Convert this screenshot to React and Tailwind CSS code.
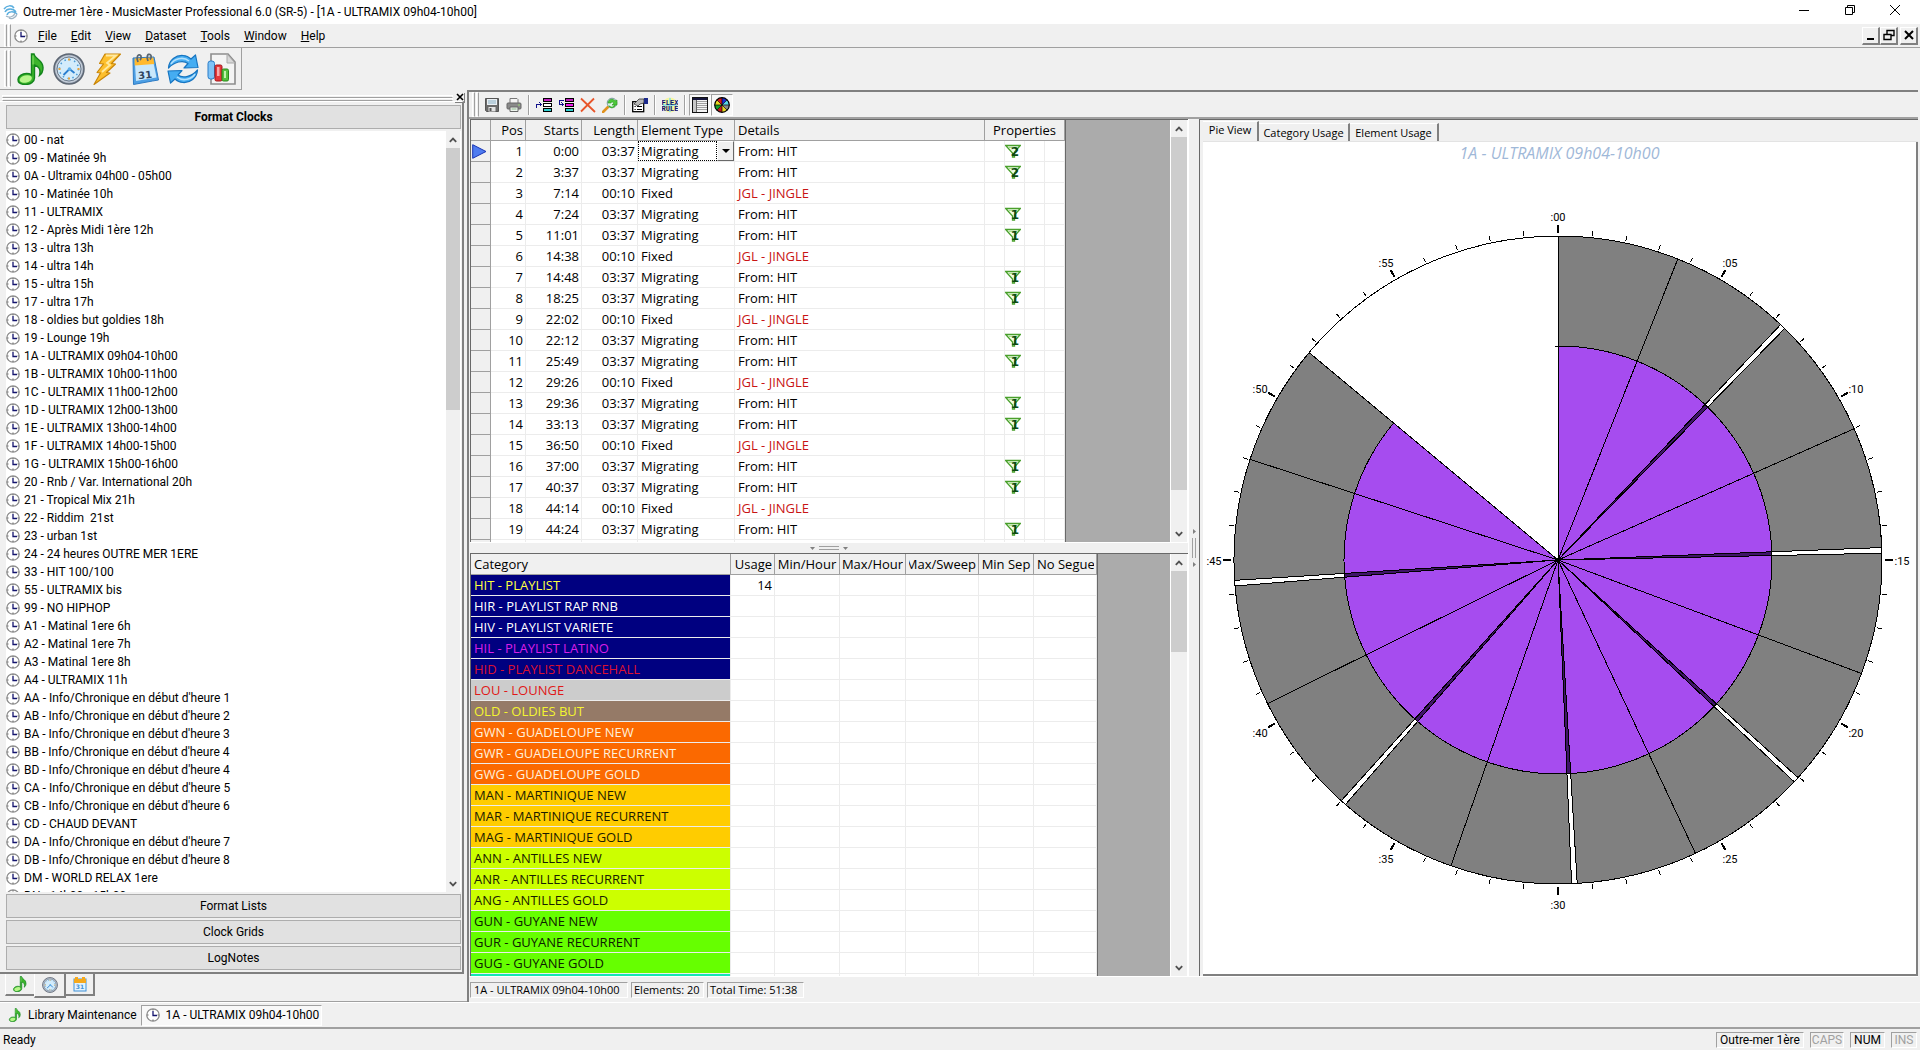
const menus = ['File', 'Edit', 'View', 'Dataset', 'Tools', 'Window', 'Help'];

const clocks = [
  '00 - nat',
  '09 - Matinée 9h',
  '0A - Ultramix 04h00 - 05h00',
  '10 - Matinée 10h',
  '11 - ULTRAMIX',
  '12 - Après Midi 1ère 12h',
  '13 - ultra 13h',
  '14 - ultra 14h',
  '15 - ultra 15h',
  '17 - ultra 17h',
  '18 - oldies but goldies 18h',
  '19 - Lounge 19h',
  '1A - ULTRAMIX 09h04-10h00',
  '1B - ULTRAMIX 10h00-11h00',
  '1C - ULTRAMIX 11h00-12h00',
  '1D - ULTRAMIX 12h00-13h00',
  '1E - ULTRAMIX 13h00-14h00',
  '1F - ULTRAMIX 14h00-15h00',
  '1G - ULTRAMIX 15h00-16h00',
  '20 - Rnb / Var. International 20h',
  '21 - Tropical Mix 21h',
  '22 - Riddim  21st',
  '23 - urban 1st',
  '24 - 24 heures OUTRE MER 1ERE',
  '33 - HIT 100/100',
  '55 - ULTRAMIX bis',
  '99 - NO HIPHOP',
  'A1 - Matinal 1ere 6h',
  'A2 - Matinal 1ere 7h',
  'A3 - Matinal 1ere 8h',
  'A4 - ULTRAMIX 11h',
  "AA - Info/Chronique en début d'heure 1",
  "AB - Info/Chronique en début d'heure 2",
  "BA - Info/Chronique en début d'heure 3",
  "BB - Info/Chronique en début d'heure 4",
  "BD - Info/Chronique en début d'heure 4",
  "CA - Info/Chronique en début d'heure 5",
  "CB - Info/Chronique en début d'heure 6",
  'CD - CHAUD DEVANT',
  "DA - Info/Chronique en début d'heure 7",
  "DB - Info/Chronique en début d'heure 8",
  'DM - WORLD RELAX 1ere',
  'DN - 14h00 - 15h00',
];

// start time, fixed element or not, number of filters
const elements = [
  ['0:00', false, 2],
  ['3:37', false, 2],
  ['7:14', true, 0],
  ['7:24', false, 1],
  ['11:01', false, 1],
  ['14:38', true, 0],
  ['14:48', false, 1],
  ['18:25', false, 1],
  ['22:02', true, 0],
  ['22:12', false, 1],
  ['25:49', false, 1],
  ['29:26', true, 0],
  ['29:36', false, 1],
  ['33:13', false, 1],
  ['36:50', true, 0],
  ['37:00', false, 1],
  ['40:37', false, 1],
  ['44:14', true, 0],
  ['44:24', false, 1],
  ['48:01', false, 1],
];

const categories = [
  ['HIT - PLAYLIST', 'bg-[#000080] text-[#ffff40]', 14],
  ['HIR - PLAYLIST RAP RNB', 'bg-[#000080] text-white'],
  ['HIV - PLAYLIST VARIETE', 'bg-[#000080] text-white'],
  ['HIL - PLAYLIST LATINO', 'bg-[#000080] text-[#d81ee8]'],
  ['HID - PLAYLIST DANCEHALL', 'bg-[#000080] text-[#dc1030]'],
  ['LOU - LOUNGE', 'bg-[#cccccc] text-[#e01818]'],
  ['OLD - OLDIES BUT', 'bg-[#957a67] text-[#f4f430]'],
  ['GWN - GUADELOUPE NEW', 'bg-[#fb6900] text-[#fff0dc]'],
  ['GWR - GUADELOUPE RECURRENT', 'bg-[#fb6900] text-[#fff0dc]'],
  ['GWG - GUADELOUPE GOLD', 'bg-[#fb6900] text-[#fff0dc]'],
  ['MAN - MARTINIQUE NEW', 'bg-[#ffcc00] text-[#1c1c00]'],
  ['MAR - MARTINIQUE RECURRENT', 'bg-[#ffcc00] text-[#1c1c00]'],
  ['MAG - MARTINIQUE GOLD', 'bg-[#ffcc00] text-[#1c1c00]'],
  ['ANN - ANTILLES NEW', 'bg-[#ccff00] text-[#182000]'],
  ['ANR - ANTILLES RECURRENT', 'bg-[#ccff00] text-[#182000]'],
  ['ANG - ANTILLES GOLD', 'bg-[#ccff00] text-[#182000]'],
  ['GUN - GUYANE NEW', 'bg-[#66ff00] text-[#0c2000]'],
  ['GUR - GUYANE RECURRENT', 'bg-[#66ff00] text-[#0c2000]'],
  ['GUG - GUYANE GOLD', 'bg-[#66ff00] text-[#0c2000]'],
  ['', 'bg-[#14e6b4]'],
];

const toMinutes = (t) => {
  const [m, s] = t.split(':').map(Number);
  return m + s / 60;
};

function ClockIcon({ className }) {
  return (
    <svg viewBox="0 0 14 14" className={className} aria-hidden="true">
      <circle cx="7" cy="7" r="6.2" fill="#fff" stroke="#8a8a8a" strokeWidth="1.3" />
      <path d="M7 1v1.6M7 11.4V13M1 7h1.6M11.4 7H13" stroke="#777" strokeWidth="1.2" />
      <path d="M7 3v4.5h4" fill="none" stroke="#14146e" strokeWidth="1.3" />
    </svg>
  );
}

function NoteIcon({ className }) {
  return (
    <svg viewBox="0 0 32 32" className={className} aria-hidden="true">
      <path d="M16.5 1h2.5c.5 5 9.500 6 9 14 0 3.500-1.500 6-3.500 7.500C26 17 24 13 19.500 12v13c0 3.600-4 6.500-9 6.500S3 29.500 3 26.500s4-6 8.500-6c2 0 3.800.5 5 1.300z" fill="#3cb52c" stroke="#13841c" strokeWidth="1.400" />
      <ellipse cx="10.800" cy="26" rx="6.200" ry="3.600" fill="#b8f58c" transform="rotate(-14 10.800 26)" />
      <path d="M18 2.500v9" stroke="#8be36d" strokeWidth="1" />
    </svg>
  );
}

function WatchIcon({ className }) {
  return (
    <svg viewBox="0 0 32 32" className={className} aria-hidden="true">
      <circle cx="16" cy="16" r="15" fill="#8c98a8" stroke="#5d6673" strokeWidth="1.500" />
      <circle cx="16" cy="16" r="13" fill="none" stroke="#c3ccd8" strokeWidth="1.500" />
      <circle cx="16" cy="16" r="12" fill="#d3ecfb" stroke="#6d7b8c" />
      <circle cx="16" cy="16" r="9.500" fill="none" stroke="#4c9cd8" strokeWidth="1.500" strokeDasharray="1.500 3.474" />
      <path d="M16 5.500v2M16 24.500v2M5.500 16h2M24.500 16h2" stroke="#e8a23a" strokeWidth="2" />
      <path d="M10.500 22l6-6 5 4" fill="none" stroke="#2a7fd0" strokeWidth="1.800" />
      <circle cx="16.500" cy="16" r="1.800" fill="#5fb0ec" />
    </svg>
  );
}

function BoltIcon() {
  return (
    <svg viewBox="0 0 32 32" className="size-8" aria-hidden="true">
      <path d="M14 1h15.500l-9 9.500 4 .5-9 8.500 3.500.5L3 31.500l6.500-11.500-3.500-.5L12.500 11l-4-.5z" fill="#fdbf2d" stroke="#c98608" strokeWidth="1.200" strokeLinejoin="round" />
      <path d="M15 2.500h10L16 10l3 2-8 7" fill="none" stroke="#ffe9a0" strokeWidth="1.800" />
    </svg>
  );
}

function CalendarIcon({ className }) {
  return (
    <svg viewBox="0 0 32 32" className={className} aria-hidden="true">
      <path d="M4 5l21-1 4.500 23-6 1-19 3.500z" fill="#4d9fe4" stroke="#2f7cc4" />
      <path d="M6 11l18.500-1 3 14.500-6 1-14.500 2.500z" fill="#c9e7fb" />
      <path d="M5.500 5.500l18.800-1 1 6.500-19.600 1.500z" fill="#ffb92e" />
      <path d="M9 9C7 4 9 1 11 2s1 4 0 5M19 8c-2-5 0-7.500 2-6.500s1 4 0 5" fill="none" stroke="#596570" strokeWidth="1.800" />
      <text x="9" y="25.500" fontSize="10" fontWeight="700" fill="#30455e" fontFamily="DejaVu Sans, sans-serif" transform="rotate(-6 16 20)">31</text>
    </svg>
  );
}

function RefreshIcon() {
  return (
    <svg viewBox="0 0 32 32" className="size-8" aria-hidden="true">
      <g fill="#45adf2" stroke="#1674c0" strokeWidth="1.200" strokeLinejoin="round">
        <path d="M1.500 15C2 7 9 2 16 2.500c3.500.2 6 1.500 8 3.500l4.500-4 2.500 12.500-14 .5 4-4.500c-5-4-14-1.500-19.500 4.500z" />
        <path d="M30.500 17C30 25 23 30 16 29.500c-3.500-.2-6-1.500-8-3.500l-4.500 4L1 18l14-.5-4 4.500c5 4 14 1.500 19.500-5z" />
      </g>
      <path d="M4 11c3-5 12-8 18-3M28 21c-3 5-12 8-18 3" fill="none" stroke="#b4e0fc" strokeWidth="1.600" />
    </svg>
  );
}

function ReportIcon() {
  return (
    <svg viewBox="0 0 32 32" className="size-8" aria-hidden="true">
      <path d="M6 1h17l7 8v22H6z" fill="#f4f4f4" stroke="#8d8d8d" strokeWidth="1.600" />
      <path d="M22 1v9h8z" fill="#d8d8d8" stroke="#a8a8a8" />
      <rect x="3" y="8" width="6.500" height="18" rx="2.500" fill="#7fc3f7" stroke="#2b7dc8" />
      <rect x="10" y="12" width="7" height="16" rx="1.500" fill="#e5383b" stroke="#a31418" />
      <rect x="12" y="14" width="2.500" height="9" fill="#f9a9a9" />
      <rect x="17" y="16" width="6.500" height="12" rx="1.500" fill="#55c23e" stroke="#2b8a1a" />
      <rect x="19" y="18" width="2" height="7" fill="#c4f3ae" />
    </svg>
  );
}

function SaveIcon() {
  return (
    <svg viewBox="0 0 16 16" className="size-4" aria-hidden="true">
      <path d="M1.500 1.500h13v13h-12l-1-1z" fill="#6b6b6b" stroke="#555" />
      <rect x="3" y="2" width="10" height="6" fill="#e9eef2" />
      <path d="M4 4h8M4 6h8" stroke="#8bb0c4" />
      <rect x="4.500" y="10" width="7" height="4.500" fill="#e3e3e3" />
      <rect x="5.500" y="11" width="2" height="3" fill="#555" />
    </svg>
  );
}

function PrintIcon() {
  return (
    <svg viewBox="0 0 16 16" className="size-4" aria-hidden="true">
      <path d="M4 6V1.500h7l1 1V6" fill="#f4f4f4" stroke="#777" />
      <rect x="1" y="6" width="14" height="6" rx="1" fill="#8a8a8a" stroke="#666" />
      <path d="M4 10h8v4.500H4z" fill="#eef5ee" stroke="#666" />
      <path d="M5.500 12h5" stroke="#8ab58a" />
      <circle cx="13" cy="8" r=".8" fill="#9be36d" />
    </svg>
  );
}

function InsertIcon({ below }) {
  return (
    <svg viewBox="0 0 16 16" className="size-4" shapeRendering="crispEdges" aria-hidden="true">
      <rect x="7.500" y="1.500" width="8" height="3" fill="#c020c0" stroke="#000" />
      <rect x="7.500" y="6.500" width="8" height="3" fill={below ? '#f020f0' : '#fff'} stroke="#000" />
      <rect x="7.500" y="11.500" width="8" height="3" fill="#30d0d0" stroke="#000" />
      {below
        ? <path d="M6 3.500H1.500v4H5M3.500 5.500l2 2-2 2" fill="none" stroke="#10108a" />
        : <path d="M.5 10.500v-3H5M3.500 5.500l2 2-2 2" fill="none" stroke="#10108a" />}
    </svg>
  );
}

function DeleteIcon() {
  return (
    <svg viewBox="0 0 16 16" className="size-4" aria-hidden="true">
      <path d="M1 1.500l14 13.500M14 1.500L1 14.500" stroke="#e8552a" strokeWidth="1.800" />
    </svg>
  );
}

function FindIcon() {
  return (
    <svg viewBox="0 0 16 16" className="size-4" aria-hidden="true">
      <path d="M1 15l5-5" stroke="#e0921e" strokeWidth="2.600" strokeLinecap="round" />
      <circle cx="10" cy="6" r="4.800" fill="#d9f3df" stroke="#7b9aa0" />
      <path d="M6 6c0-4 5-5 7-2l2-1v5h-5l2-2c-1-1.500-3-1-3 0z" fill="#4cc93a" stroke="#2a9420" strokeWidth=".6" />
      <path d="M13 8c-1 3-4 3-6 1" fill="none" stroke="#3eb52e" strokeWidth="1.500" />
    </svg>
  );
}

function PropertiesIcon() {
  return (
    <svg viewBox="0 0 16 16" className="size-4" aria-hidden="true">
      <rect x=".7" y="4.700" width="11" height="10" fill="#fff" stroke="#000" strokeWidth="1.300" />
      <path d="M2.500 9.500h1.200M5 9.500h5M2.500 12.500h1.200M5 12.500h5" stroke="#000" strokeWidth="1.200" />
      <path d="M2 7l5-5 5 0v4L8 7 6 9z" fill="#b8b8b8" stroke="#333" strokeWidth=".8" />
      <path d="M12 1h4v6h-4z" fill="#1c2a8c" />
    </svg>
  );
}

function FlexRuleIcon() {
  return (
    <svg viewBox="0 0 16 16" className="size-4" aria-hidden="true">
      <circle cx="8" cy="8" r="7.500" fill="#f6f6a0" />
      <path d="M8 1v14M1 8h14" stroke="#7fe0f0" strokeWidth="1.500" />
      <text x="8" y="7.500" textAnchor="middle" fontSize="7" fontWeight="700" fill="#10106e" fontFamily="Liberation Mono, monospace">FLEX</text>
      <text x="8" y="14" textAnchor="middle" fontSize="7" fontWeight="700" fill="#10106e" fontFamily="Liberation Mono, monospace">RULE</text>
    </svg>
  );
}

function ListIcon() {
  return (
    <svg viewBox="0 0 16 16" className="size-4" shapeRendering="crispEdges" aria-hidden="true">
      <rect x=".5" y=".5" width="15" height="15" fill="#f4f4f4" stroke="#111" />
      <rect x="1" y="1" width="14" height="2" fill="#15153c" />
      <rect x="1" y="3" width="3" height="12" fill="#c8c8c8" />
      <path d="M4 4.500h11M4 6.500h11M4 8.500h11M4 10.500h11M4 12.500h11" stroke="#a0a0a0" />
      <path d="M4.500 3v12" stroke="#666" />
    </svg>
  );
}

function PieIcon() {
  return (
    <svg viewBox="0 0 16 16" className="size-4" aria-hidden="true">
      <path d="M8 8V.7A7.300 7.300 0 0 1 13.200 2.800z" fill="#1a2bd0" />
      <path d="M8 8l5.200-5.200A7.300 7.300 0 0 1 15.300 8z" fill="#58d8e8" />
      <path d="M8 8h7.300a7.300 7.300 0 0 1-2.100 5.200z" fill="#8a8a8a" />
      <path d="M8 8l5.200 5.200A7.300 7.300 0 0 1 8 15.300z" fill="#e8d820" />
      <path d="M8 8v7.300a7.300 7.300 0 0 1-5.200-2.100z" fill="#c01818" />
      <path d="M8 8l-5.200 5.200A7.300 7.300 0 0 1 .7 8z" fill="#18a028" />
      <path d="M8 8H.7a7.300 7.300 0 0 1 2.100-5.200z" fill="#e8d820" />
      <path d="M8 8L2.800 2.800A7.300 7.300 0 0 1 8 .7z" fill="#d81818" />
      <path d="M8 .7v14.600M.7 8h14.600M2.800 2.800l10.400 10.400M13.200 2.800L2.800 13.200" stroke="#000" strokeWidth=".7" />
      <circle cx="8" cy="8" r="7.300" fill="none" stroke="#000" strokeWidth="1.200" />
    </svg>
  );
}

function FilterIcon({ count }) {
  return (
    <svg viewBox="0 0 16 14" className="block h-3.5 w-4" aria-hidden="true">
      <path d="M.7 1.500h14.600L9.500 8v5h-2V9z" fill="#f0ffe8" stroke="#4aa02c" strokeWidth="1.300" />
      <path d="M4 3.500h8" stroke="#a8e08c" />
      <text x="10" y="12" textAnchor="middle" fontSize="12" fontWeight="700" fill="#0c4a12" fontFamily="DejaVu Sans, sans-serif">{count}</text>
    </svg>
  );
}

function Grip() {
  return (
    <div className="flex gap-px self-stretch" aria-hidden="true">
      <span className="w-[3px] border border-white border-r-[#a0a0a0]" />
      <span className="w-[3px] border border-white border-r-[#a0a0a0]" />
    </div>
  );
}

function Separator() {
  return <span className="mx-[3px] box-content h-5 w-px border-r border-white bg-[#a0a0a0]" />;
}

function Scrollbar({ thumb, width = 'w-[18px]' }) {
  return (
    <div className={'flex shrink-0 flex-col border-x border-white bg-[#f0f0f0] ' + width}>
      <button aria-label="Scroll up" className="flex h-[17px] shrink-0 items-center justify-center">
        <svg viewBox="0 0 8 6" className="h-1.5 w-2"><path d="M.8 4.800L4 1.500l3.200 3.300" fill="none" stroke="#505050" strokeWidth="1.800" /></svg>
      </button>
      <div className="min-h-0 flex-1">
        <div className={'bg-[#cdcdcd] ' + thumb} />
      </div>
      <button aria-label="Scroll down" className="flex h-[17px] shrink-0 items-center justify-center">
        <svg viewBox="0 0 8 6" className="h-1.5 w-2"><path d="M.8 1.200L4 4.500l3.200-3.300" fill="none" stroke="#505050" strokeWidth="1.800" /></svg>
      </button>
    </div>
  );
}

function ToolButton({ label, pressed, children }) {
  return (
    <button
      aria-label={label}
      className={`flex size-[22px] items-center justify-center ${pressed ? 'border border-white border-l-[#a0a0a0] border-t-[#a0a0a0] bg-[#f8f8f8]' : ''}`}
    >
      {children}
    </button>
  );
}

function StatusCell({ className = '', children }) {
  return (
    <span className={'whitespace-nowrap border border-white border-l-[#a0a0a0] border-t-[#a0a0a0] leading-[14px] ' + className}>
      {children}
    </span>
  );
}

function TitleBar() {
  return (
    <header className="flex h-6 shrink-0 items-center bg-white pl-[3px]">
      <svg viewBox="0 0 16 16" className="size-4" aria-hidden="true">
        <path d="M1 5c3-4 8-4 10-1M2 8c2-4 8-4 11 0M4 11c1-4 7-4 10-1" fill="none" stroke="#5aaede" strokeWidth="1.500" />
        <path d="M6 14c2 1.500 7 0 8-4M3 12c3 2 8 1 9-3" fill="none" stroke="#9fb4c4" strokeWidth="1.300" />
      </svg>
      <h1 className="ml-1 flex-1">Outre-mer 1ère - MusicMaster Professional 6.0 (SR-5) - [1A - ULTRAMIX 09h04-10h00]</h1>
      <div className="flex pb-1 pr-0.5">
        <button aria-label="Minimize" className="flex w-[46px] justify-center">
          <svg viewBox="0 0 10 10" className="size-2.5"><path d="M0 5.500h10" stroke="#000" /></svg>
        </button>
        <button aria-label="Restore" className="flex w-[45px] justify-center">
          <svg viewBox="0 0 10 10" className="size-2.5" fill="none" stroke="#000"><path d="M.5 2.500h7v7h-7zM2.500 2.500v-2h7v7h-2" /></svg>
        </button>
        <button aria-label="Close" className="flex w-[46px] justify-center">
          <svg viewBox="0 0 10 10" className="size-2.5"><path d="M0 0l10 10M10 0L0 10" stroke="#000" /></svg>
        </button>
      </div>
    </header>
  );
}

function MenuBar() {
  const box = 'flex size-[18px] items-center justify-center border border-white border-b-2 border-r-2 border-b-[#808080] border-r-[#808080]';
  return (
    <nav className="flex h-6 shrink-0 items-center border-b border-[#a0a0a0] pl-1 pr-0.5">
      <Grip />
      <ClockIcon className="mx-[3px] size-3.5" />
      <div className="flex flex-1">
        {menus.map((m) => (
          <button key={m} className="px-[7px]"><span className="underline">{m[0]}</span>{m.slice(1)}</button>
        ))}
      </div>
      <div className="flex">
        <button aria-label="Minimize window" className={box}>
          <svg viewBox="0 0 12 12" className="size-3"><path d="M2 10h7" stroke="#000" strokeWidth="2" /></svg>
        </button>
        <button aria-label="Restore window" className={box}>
          <svg viewBox="0 0 12 12" className="size-3" fill="none" stroke="#000"><path d="M1 5.500h7v5H1zM4 5V1.500h7v5H8M1 5.500h7M4 1.500h7" strokeWidth="1.400" /></svg>
        </button>
        <button aria-label="Close window" className={box + ' ml-0.5'}>
          <svg viewBox="0 0 12 12" className="size-3"><path d="M2 2l8 8M10 2l-8 8" stroke="#000" strokeWidth="2" /></svg>
        </button>
      </div>
    </nav>
  );
}

function MainToolbar() {
  return (
    <div className="flex h-[42px] shrink-0">
      <div className="flex items-center border-b border-r border-[#a0a0a0] py-0.5 pl-1 pr-0.5">
        <Grip />
        {[
          ['Library', <NoteIcon className="size-8" />],
          ['Clocks', <WatchIcon className="size-8" />],
          ['Schedule', <BoltIcon />],
          ['Calendar', <CalendarIcon className="size-8" />],
          ['Refresh', <RefreshIcon />],
          ['Reports', <ReportIcon />],
        ].map(([label, icon]) => (
          <button key={label} aria-label={label} className="flex h-9 w-[38px] items-center justify-center pl-0.5">{icon}</button>
        ))}
      </div>
    </div>
  );
}

function Sidebar() {
  const bar = 'h-6 shrink-0 border border-[#adadad] bg-[#e1e1e1]';
  return (
    <aside className="flex w-[467px] shrink-0 flex-col border-b border-[#a0a0a0]">
      <div className="flex h-[11px] items-center gap-0.5 pl-0.5">
        <div className="flex-1 pt-1">
          <div className="h-[3px] border border-white border-b-[#a0a0a0]" />
          <div className="h-[3px] border border-white border-b-[#a0a0a0]" />
        </div>
        <button aria-label="Close panel" className="mr-0.5 mt-1 flex size-[10px] items-center justify-center border-b border-r border-[#808080]">
          <svg viewBox="0 0 8 8" className="size-2"><path d="M1 1l6 6M7 1L1 7" stroke="#000" strokeWidth="1.600" /></svg>
        </button>
      </div>
      <div className="mr-[3px] flex min-h-0 flex-1 flex-col gap-0.5 border-b-2 border-r-2 border-[#808080] border-t border-t-white pb-0.5 pl-1.5 pr-px pt-[3px]">
        <button className={bar + ' font-bold'}>Format Clocks</button>
        <div className="flex min-h-0 flex-1 bg-white">
          <ul className="min-w-0 flex-1 overflow-hidden">
            {clocks.map((c) => (
              <li key={c} className="flex h-[18px] items-center gap-1 whitespace-pre">
                <ClockIcon className="size-3.5" />
                {c}
              </li>
            ))}
          </ul>
          <Scrollbar thumb="h-[36%]" width="w-4" />
        </div>
        <button className={bar}>Format Lists</button>
        <button className={bar}>Clock Grids</button>
        <button className={bar}>LogNotes</button>
      </div>
      <div className="flex h-[27px] shrink-0 items-start pl-[5px]">
        <button aria-label="Library tab" className="flex h-[22px] w-[29px] items-center justify-center border-b-2 border-l border-b-[#808080] border-l-white"><NoteIcon className="size-4" /></button>
        <button aria-label="Clocks tab" className="flex h-6 w-8 items-center justify-center border-b-2 border-r-2 border-[#808080] border-l border-l-white"><WatchIcon className="size-4" /></button>
        <button aria-label="Calendar tab" className="flex h-[22px] w-[29px] items-center justify-center border-b-2 border-r-2 border-[#808080]">
          <svg viewBox="0 0 14 16" className="h-4 w-3.5" aria-hidden="true">
            <rect x="1" y="3" width="12" height="12" fill="#e3f2fd" stroke="#3f92d8" />
            <path d="M1 3h12v4H1zM2 1h3v2H2zM9 1h3v2H9z" fill="#f5a81c" />
            <text x="7" y="13" textAnchor="middle" fontSize="6" fontWeight="700" fill="#3f92d8" fontFamily="DejaVu Sans, sans-serif">31</text>
          </svg>
        </button>
      </div>
    </aside>
  );
}

function EditorToolbar() {
  return (
    <div className="flex h-[25px] shrink-0 items-center pl-[3px]">
      <Grip />
      <span className="w-0.5" />
      <ToolButton label="Save"><SaveIcon /></ToolButton>
      <ToolButton label="Print"><PrintIcon /></ToolButton>
      <Separator />
      <ToolButton label="Insert before"><InsertIcon /></ToolButton>
      <ToolButton label="Insert after"><InsertIcon below /></ToolButton>
      <ToolButton label="Delete"><DeleteIcon /></ToolButton>
      <ToolButton label="Find and replace"><FindIcon /></ToolButton>
      <Separator />
      <ToolButton label="Properties"><PropertiesIcon /></ToolButton>
      <Separator />
      <ToolButton label="Flex rule"><FlexRuleIcon /></ToolButton>
      <Separator />
      <ToolButton label="List view" pressed><ListIcon /></ToolButton>
      <ToolButton label="Pie view" pressed><PieIcon /></ToolButton>
    </div>
  );
}

const th = 'h-[21px] overflow-hidden whitespace-nowrap border-b border-r border-[#a0a0a0] bg-[#f0f0f0] p-0 font-normal leading-5';
const td = 'h-[21px] whitespace-nowrap border-b border-r border-[#ececec] bg-white p-0 leading-5';

function ElementGrid() {
  return (
    <div className="flex min-h-0 flex-1 border-l border-t border-[#696969]">
      <div className="min-w-0 flex-1 overflow-hidden bg-[#ababab]">
        <table className="w-[595px] table-fixed border-separate border-spacing-0 border-r border-[#696969] font-['Open_Sans',sans-serif] text-[13px]">
          <colgroup>
            <col className="w-[20px]" /><col className="w-[35px]" /><col className="w-[56px]" /><col className="w-[56px]" />
            <col className="w-[97px]" /><col className="w-[250px]" />
            <col className="w-[20px]" /><col className="w-[20px]" /><col className="w-[20px]" /><col className="w-[20px]" />
          </colgroup>
          <thead>
            <tr>
              <th className={th} />
              <th className={th + ' pr-0.5 text-right'}>Pos</th>
              <th className={th + ' pr-0.5 text-right'}>Starts</th>
              <th className={th + ' pr-0.5 text-right'}>Length</th>
              <th className={th + ' pl-[3px] text-left'}>Element Type</th>
              <th className={th + ' pl-[3px] text-left'}>Details</th>
              <th colSpan={4} className={th}>Properties</th>
            </tr>
          </thead>
          <tbody>
            {elements.slice(0, 19).map(([start, fixed, filters], i) => (
              <tr key={start}>
                <th className={th}>
                  {i === 0 && (
                    <svg viewBox="0 0 15 15" className="ml-px block size-[15px]" aria-hidden="true">
                      <path d="M.7.7L14 7.500.7 14.300z" fill="#4f7cf0" stroke="#1733b4" />
                    </svg>
                  )}
                </th>
                <td className={td + ' pr-0.5 text-right'}>{i + 1}</td>
                <td className={td + ' pr-0.5 text-right'}>{start}</td>
                <td className={td + ' pr-0.5 text-right'}>{fixed ? '00:10' : '03:37'}</td>
                {i === 0 ? (
                  <td className={td}>
                    <div className="flex h-5">
                      <select aria-label="Element type" className="min-w-0 flex-1 appearance-none border border-dotted border-black bg-white pl-0.5 leading-[18px]">
                        <option>Migrating</option>
                        <option>Fixed</option>
                      </select>
                      <span className="flex w-[17px] items-center justify-center border border-white border-b-[#696969] border-r-[#696969] bg-[#f0f0f0]">
                        <svg viewBox="0 0 8 4" className="h-1 w-2" aria-hidden="true"><path d="M0 0h8L4 4z" /></svg>
                      </span>
                    </div>
                  </td>
                ) : (
                  <td className={td + ' pl-[3px]'}>{fixed ? 'Fixed' : 'Migrating'}</td>
                )}
                <td className={td + ' pl-[3px] ' + (fixed ? 'text-[#c81414]' : '')}>{fixed ? 'JGL - JINGLE' : 'From: HIT'}</td>
                <td className={td} />
                <td className={td}>{filters > 0 && <FilterIcon count={filters} />}</td>
                <td className={td} />
                <td className={td} />
              </tr>
            ))}
            <tr>
              <th className={th} />
              {Array.from({ length: 9 }, (_, i) => <td key={i} className={td} />)}
            </tr>
          </tbody>
        </table>
      </div>
      <Scrollbar thumb="h-[91%]" />
    </div>
  );
}

function CategoryGrid() {
  return (
    <div className="flex min-h-0 flex-1 border-l border-t border-[#696969]">
      <div className="min-w-0 flex-1 overflow-hidden bg-[#ababab]">
        <table className="w-[627px] table-fixed border-separate border-spacing-0 border-r border-[#696969] font-['Open_Sans',sans-serif] text-[13px]">
          <colgroup>
            <col className="w-[260px]" /><col className="w-[44px]" /><col className="w-[65px]" /><col className="w-[66px]" />
            <col className="w-[73px]" /><col className="w-[55px]" /><col className="w-[63px]" />
          </colgroup>
          <thead>
            <tr>
              <th className={th + ' pl-[3px] text-left'}>Category</th>
              <th className={th + ' px-0.5'}><div className="flex justify-end overflow-hidden">Usage</div></th>
              <th className={th + ' px-0.5'}><div className="flex justify-center overflow-hidden">Min/Hour</div></th>
              <th className={th + ' px-0.5'}><div className="flex justify-center overflow-hidden">Max/Hour</div></th>
              <th className={th + ' pl-[3px] pr-0.5'}><div className="flex justify-end overflow-hidden">Max/Sweep</div></th>
              <th className={th + ' px-0.5'}><div className="flex justify-center overflow-hidden">Min Sep</div></th>
              <th className={th + ' pl-[3px] pr-0.5'}><div className="flex overflow-hidden">No Segue</div></th>
            </tr>
          </thead>
          <tbody>
            {categories.map(([name, color, usage]) => (
              <tr key={name}>
                <td className={'h-[21px] whitespace-nowrap border-b border-r border-[#ececec] p-0 pl-[3px] leading-5 ' + color}>{name}</td>
                <td className={td + ' pr-0.5 text-right'}>{usage}</td>
                <td className={td} /><td className={td} /><td className={td} /><td className={td} /><td className={td} />
              </tr>
            ))}
          </tbody>
        </table>
      </div>
      <Scrollbar thumb="h-[21%]" />
    </div>
  );
}

const CX = 354;
const CY = 394;

function polar(minutes, r) {
  const a = (minutes * 6 * Math.PI) / 180;
  return [CX + r * Math.sin(a), CY - r * Math.cos(a)];
}

function sector(from, to, r) {
  const [x1, y1] = polar(from, r);
  const [x2, y2] = polar(to, r);
  return `M${CX} ${CY}L${x1} ${y1}A${r} ${r} 0 0 1 ${x2} ${y2}Z`;
}

function PieChart() {
  const slices = elements.map(([start, fixed]) => {
    const from = toMinutes(start);
    return { from, to: from + (fixed ? 10 / 60 : 217 / 60), fixed };
  });
  return (
    <svg viewBox="0 0 711 808" className="block min-h-0 w-full flex-1" role="img" aria-label="Clock pie">
      <g stroke="#000" shapeRendering="crispEdges">
        <circle cx={CX} cy={CY} r="324" fill="#fff" />
        {slices.map((s) => <path key={s.from} d={sector(s.from, s.to, 324)} fill={s.fixed ? '#fff' : '#808080'} />)}
        {slices.map((s) => <path key={s.from} d={sector(s.from, s.to, 214)} fill={s.fixed ? '#3f1468' : '#a64cef'} />)}
        <path d={`M${CX - 3} ${CY - 214}h3`} />
        <circle cx={CX} cy={CY} r="2" fill="#000" />
        {Array.from({ length: 60 }, (_, m) => {
          const major = m % 5 === 0;
          const [x1, y1] = polar(m, major ? 327 : 326);
          const [x2, y2] = polar(m, major ? 335 : 331);
          return <line key={m} x1={x1} y1={y1} x2={x2} y2={y2} strokeWidth={major ? 2 : 1} />;
        })}
      </g>
      <g fontSize="11" textAnchor="middle" fill="#000">
        {Array.from({ length: 12 }, (_, i) => {
          const [x, y] = polar(i * 5, 344);
          return <text key={i} x={x} y={y + 5}>{':' + String(i * 5).padStart(2, '0')}</text>;
        })}
      </g>
    </svg>
  );
}

function PiePanel() {
  const tab = 'border-r-2 border-[#808080] border-t border-t-white px-1 leading-[16px]';
  return (
    <section className="flex min-w-0 flex-1 flex-col border-l border-t border-[#696969] pl-[3px]">
      <div className="flex h-[22px] shrink-0 items-end border-b border-[#e3e3e3] font-['Open_Sans',sans-serif] text-[11px]" role="tablist">
        <button role="tab" aria-selected="true" className="h-5 w-[56px] border-r-2 border-t border-[#808080] border-t-white pb-1 leading-[14px]">Pie View</button>
        <button role="tab" aria-selected="false" className={tab + ' h-[18px] w-[91px]'}>Category Usage</button>
        <button role="tab" aria-selected="false" className={tab + ' h-[18px] w-[89px]'}>Element Usage</button>
      </div>
      <div className="flex min-h-0 flex-1 flex-col border-b-2 border-r-2 border-[#808080] bg-white">
        <h2 className="h-6 shrink-0 text-center font-['Open_Sans',sans-serif] text-base italic leading-[22px] text-[#9fb8d8]">1A - ULTRAMIX 09h04-10h00</h2>
        <PieChart />
      </div>
    </section>
  );
}

export default function App() {
  return (
    <div className="flex h-screen flex-col overflow-hidden bg-[#f0f0f0] font-['Roboto',sans-serif] text-xs text-black">
      <TitleBar />
      <MenuBar />
      <MainToolbar />
      <div className="flex min-h-0 flex-1">
        <Sidebar />
        <main className="mr-0.5 flex min-w-0 flex-1 flex-col border-l-2 border-t-2 border-[#808080]">
          <EditorToolbar />
          <div className="flex min-h-0 flex-1 border-t-2 border-[#a0a0a0] pl-px">
            <div className="flex w-[718px] shrink-0 flex-col">
              <ElementGrid />
              <div className="flex h-[11px] shrink-0 items-center justify-center gap-1 border-t border-white" aria-hidden="true">
                <svg viewBox="0 0 5 3" className="h-[3px] w-[5px]"><path d="M0 0h5L2.500 3z" fill="#808080" /></svg>
                <span className="h-1 w-5 border-y border-[#a0a0a0]" />
                <svg viewBox="0 0 5 3" className="h-[3px] w-[5px]"><path d="M0 0h5L2.500 3z" fill="#808080" /></svg>
              </div>
              <CategoryGrid />
            </div>
            <div className="flex w-[11px] shrink-0 flex-col items-center justify-center gap-1 border-l border-white" aria-hidden="true">
              <svg viewBox="0 0 3 5" className="h-[5px] w-[3px]"><path d="M0 0v5l3-2.500z" fill="#808080" /></svg>
              <span className="h-5 w-1 border-x border-[#a0a0a0]" />
              <svg viewBox="0 0 3 5" className="h-[5px] w-[3px]"><path d="M0 0v5l3-2.500z" fill="#808080" /></svg>
            </div>
            <PiePanel />
          </div>
          <div className="flex h-[26px] shrink-0 items-center gap-[3px] border-t border-white pl-px font-['Open_Sans',sans-serif] text-[11px]">
            <StatusCell className="min-w-[158px] pl-[3px]">1A - ULTRAMIX 09h04-10h00</StatusCell>
            <StatusCell className="min-w-[73px] pl-0.5">Elements: 20</StatusCell>
            <StatusCell className="min-w-[97px] pl-0.5">Total Time: 51:38</StatusCell>
          </div>
        </main>
      </div>
      <div className="flex h-[27px] shrink-0 items-center border-b-2 border-t border-[#a0a0a0] border-t-white pl-2">
        <button className="flex h-5 items-center gap-1.5 pr-1"><NoteIcon className="size-3.5" />Library Maintenance</button>
        <button className="flex h-[21px] items-center gap-1.5 border border-white border-l-[#a0a0a0] border-t-[#a0a0a0] bg-[#f8f8f8] pl-1 pr-0.5">
          <ClockIcon className="size-3.5" />1A - ULTRAMIX 09h04-10h00
        </button>
      </div>
      <footer className="flex h-[21px] shrink-0 items-center gap-1.5 px-[3px]">
        <span className="flex-1">Ready</span>
        <StatusCell className="min-w-[88px] text-center">Outre-mer 1ère</StatusCell>
        <StatusCell className="min-w-[34px] text-center text-[#a0a0a0]">CAPS</StatusCell>
        <StatusCell className="min-w-[35px] text-center">NUM</StatusCell>
        <StatusCell className="min-w-[26px] text-center text-[#a0a0a0]">INS</StatusCell>
      </footer>
    </div>
  );
}
